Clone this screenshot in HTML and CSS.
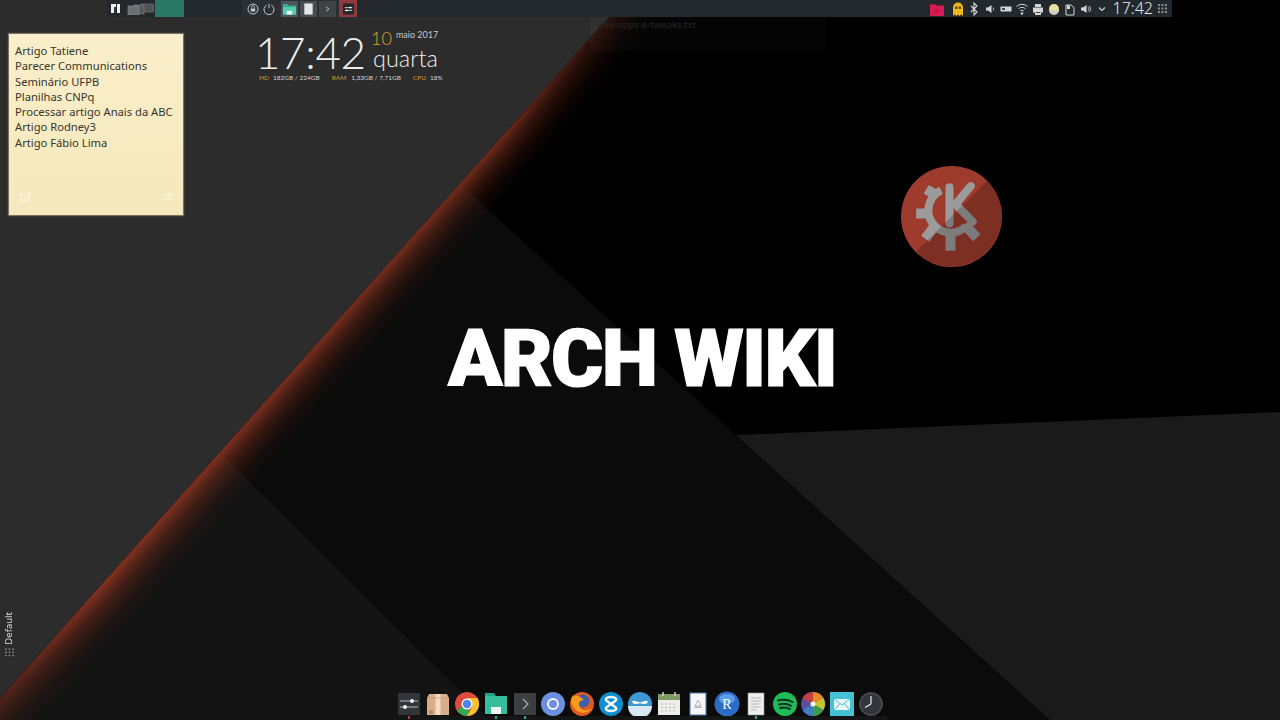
FILE: index.html
```html
<!DOCTYPE html>
<html lang="pt">
<head>
<meta charset="utf-8">
<title>Arch Wiki</title>
<link rel="stylesheet" href="styles.css">
</head>
<body>
<div class="desktop">
  <svg class="wallpaper" viewBox="0 0 1280 720" preserveAspectRatio="none">
    <defs>
      <linearGradient id="glow" gradientUnits="userSpaceOnUse" x1="220" y1="452" x2="254" y2="482">
        <stop offset="0" stop-color="#7e3020"/><stop offset=".28" stop-color="#7a2e1c" stop-opacity=".52"/><stop offset=".65" stop-color="#6a2814" stop-opacity=".16"/><stop offset="1" stop-color="#6a2814" stop-opacity="0"/>
      </linearGradient>
      <linearGradient id="along" gradientUnits="userSpaceOnUse" x1="624" y1="0" x2="0" y2="698">
        <stop offset="0" stop-color="#fff" stop-opacity=".3"/><stop offset=".2" stop-color="#fff"/><stop offset=".85" stop-color="#fff"/><stop offset="1" stop-color="#fff" stop-opacity=".55"/>
      </linearGradient>
      <mask id="fade"><rect width="1280" height="720" fill="url(#along)"/></mask>
    </defs>
    <rect width="1280" height="720" fill="#2c2c2c"/>
    <polygon points="624,0 1280,0 1280,720 0,720 0,698" fill="#000"/>
    <polygon points="460,184 1050,720 490,720 220,452" fill="#0b0b0b"/>
    <polygon points="220,452 490,720 0,720 0,698" fill="#131313"/>
    <polygon points="736,435 1280,412 1280,720 1050,720" fill="#1a1a1a"/>
    <g mask="url(#fade)"><polygon points="624,0 1280,0 1280,720 0,720 0,698" fill="url(#glow)"/></g>
    <rect x="590" y="17" width="236" height="34" fill="#fff" opacity=".018"/>
  </svg>

  <header class="panel">
    <svg class="menu-ic" viewBox="0 0 9 9"><path d="M0 0h5v9H0zM6 0h3v9H6z" fill="#eee"/><path d="M3 3h2v6H3z" fill="#333"/></svg>
    <svg class="pager" viewBox="0 0 27 12"><rect x="14" y="1" width="12.5" height="8" fill="#4d5356" stroke="#6d7274" stroke-width=".7"/><rect x="7" y="2" width="10" height="9" fill="#53595b" stroke="#767b7d" stroke-width=".7"/><rect x="1" y="3" width="11" height="9" fill="#6b7072" stroke="#8b8f90" stroke-width=".7"/></svg>
    <div class="active-task"></div>
    <div class="launchers">
      <svg class="ic-sm" viewBox="0 0 12 12"><circle cx="6" cy="6" r="5" fill="none" stroke="#c8cacb"/><rect x="3.8" y="5.5" width="4.4" height="3" fill="#c8cacb"/><path d="M4.6 5.5V4a1.4 1.4 0 0 1 2.8 0v1.500" fill="none" stroke="#c8cacb" stroke-width=".8"/></svg>
      <svg class="ic-sm power" viewBox="0 0 12 12"><path d="M3.600 2.200a5 5 0 1 0 4.800 0M6 .8v4.400" fill="none" stroke="#c8cacb"/></svg>
      <div class="task task-folder"><svg class="ic-task" viewBox="0 0 14 12"><path d="M0 1h5l1.500 1.500H14V12H0z" fill="#35b495"/><path d="M0 4h14v8H0z" fill="#54cdb0"/><path d="M4 12V8h6v4z" fill="#e8f5f1"/></svg></div>
      <div class="task"><svg class="ic-task" viewBox="0 0 14 12"><rect x="2.500" width="9" height="12" fill="#e6e7e8"/></svg></div>
      <div class="task task-term"><svg class="ic-task" viewBox="0 0 14 12"><path d="M5.500 3.500 8.500 6l-3 2.500" fill="none" stroke="#9a9d9f" stroke-width="1.100"/></svg></div>
      <div class="task task-current"><svg class="ic-task" viewBox="0 0 14 12"><rect x="1" y="0" width="12" height="12" rx="1" fill="#24282b"/><path d="M3 4.500h8M3 7.500h8" stroke="#d8dadb"/><circle cx="9" cy="4.500" r="1" fill="#fff"/><circle cx="5" cy="7.500" r="1" fill="#fff"/></svg></div>
    </div>
    <div class="tray">
      <svg class="tray-ic first" viewBox="0 0 16 14"><path d="M1 2h5l1.500 1.500H15V14H1z" fill="#d81b52"/><path d="M1 2h5l1 1H1z" fill="#a51440"/><circle cx="8" cy="9" r="1.500" fill="none" stroke="#8a1238" stroke-width=".7"/></svg>
      <svg class="tray-ic" viewBox="0 0 16 14"><path d="M3 14V5.500a5 5 0 0 1 10 0V14l-1.700-1.500L9.600 14 8 12.500 6.400 14l-1.700-1.500z" fill="#e9b71e"/><rect x="5" y="4.500" width="2.400" height="2.400" fill="#5b4a10"/><rect x="8.600" y="4.500" width="2.400" height="2.400" fill="#5b4a10"/></svg>
      <svg class="tray-ic" viewBox="0 0 16 14"><path d="M5 4l6 6-3 3V1l3 3-6 6" fill="none" stroke="#d4d6d7" stroke-width="1.100"/></svg>
      <svg class="tray-ic" viewBox="0 0 16 14"><path d="M4 5.500h2L9.500 3v8L6 8.500H4z" fill="#d4d6d7"/><path d="M11 5.500a2 2 0 0 1 0 3" fill="none" stroke="#d4d6d7" stroke-width=".8"/></svg>
      <svg class="tray-ic" viewBox="0 0 16 14"><rect x="2.500" y="4.500" width="11" height="5" fill="#d4d6d7"/><rect x="4" y="6" width="3" height="2" fill="#444"/></svg>
      <svg class="tray-ic" viewBox="0 0 16 14"><path d="M2.500 4.500a8 8 0 0 1 11 0M4.500 6.800a5 5 0 0 1 7 0M6.300 9a2.500 2.500 0 0 1 3.400 0" fill="none" stroke="#d4d6d7"/><circle cx="8" cy="11.500" r="1.200" fill="#d4d6d7"/></svg>
      <svg class="tray-ic" viewBox="0 0 16 14"><path d="M5 2h6v3H5zM3 5.500h10v5H3zM5 9h6v4H5z" fill="#d4d6d7"/><path d="M5.800 10.500h4.400" stroke="#444"/></svg>
      <svg class="tray-ic" viewBox="0 0 16 14"><circle cx="8" cy="7" r="5" fill="#e8e29a"/><path d="M3 8h10a5 5 0 0 1-10 0z" fill="#cfd0c4"/></svg>
      <svg class="tray-ic" viewBox="0 0 16 14"><path d="M4 3h5l3 2.500V13H4z" fill="#25292b" stroke="#d4d6d7"/><path d="M5 3.500h3V7H5z" fill="#d4d6d7"/></svg>
      <svg class="tray-ic" viewBox="0 0 16 14"><path d="M3 5.500h2L8.500 3v8L5 8.500H3z" fill="#d4d6d7"/><path d="M10 5a2.800 2.800 0 0 1 0 4M11.500 3.800a5 5 0 0 1 0 6.400" fill="none" stroke="#d4d6d7" stroke-width=".8"/></svg>
      <svg class="tray-ic" viewBox="0 0 16 14"><path d="M5 5.500l3 3 3-3" fill="none" stroke="#d4d6d7" stroke-width="1.100"/></svg>
      <span class="panel-time">17:42</span>
      <svg class="grid-ic" viewBox="0 0 9 9"><g fill="#8b8f91"><rect width="2" height="2"/><rect x="3.500" width="2" height="2"/><rect x="7" width="2" height="2"/><rect y="3.500" width="2" height="2"/><rect x="3.500" y="3.500" width="2" height="2"/><rect x="7" y="3.500" width="2" height="2"/><rect y="7" width="2" height="2"/><rect x="3.500" y="7" width="2" height="2"/><rect x="7" y="7" width="2" height="2"/></g></svg>
    </div>
  </header>

  <span class="ghost-title">kde-apps-e-tweaks.txt</span>

  <aside class="note">
    <ul class="note-list">
      <li>Artigo Tatiene</li>
      <li>Parecer Communications</li>
      <li>Seminário UFPB</li>
      <li>Planilhas CNPq</li>
      <li>Processar artigo Anais da ABC</li>
      <li>Artigo Rodney3</li>
      <li>Artigo Fábio Lima</li>
    </ul>
    <div class="note-tools">
      <svg class="note-ic" viewBox="0 0 10 10"><path d="M1 1v8h8V1M1 1l4 4 4-4M5 5v4" fill="none" stroke="#fffdf5" stroke-width=".9"/></svg>
      <svg class="note-ic" viewBox="0 0 10 10"><path d="M0 3.500h10M0 7h10M6 1v5" fill="none" stroke="#fffdf5" stroke-width=".9"/></svg>
    </div>
  </aside>

  <section class="clock">
    <div class="clock-top">
      <span class="clock-time">17:42</span>
      <div class="clock-date">
        <div class="clock-date-row"><span class="clock-day">10</span><span class="clock-month">maio 2017</span></div>
        <span class="clock-weekday">quarta</span>
      </div>
    </div>
    <div class="clock-stats">
      <span class="lab lab-hd">HD</span><span class="val val-mid">182GB / 224GB</span>
      <span class="lab lab-ram">RAM</span><span class="val val-mid">1,33GB / 7,71GB</span>
      <span class="lab lab-hd">CPU</span><span class="val">18%</span>
    </div>
  </section>

  <svg class="kde-logo" viewBox="0 0 100 100">
    <circle cx="50" cy="50" r="50" fill="#9e3b2c"/>
    <g fill="none" stroke="#9b9b9b">
      <path d="M39.700 24.100A22 22 0 1 0 64.600 59.600" stroke-width="8"/>
      <path d="M35 29 25 23M28 47H15M33 60 24 72M49 66V84M63 58 75 71" stroke-width="10"/>
      <path d="M48 21V57" stroke-width="8" stroke-linecap="round"/>
      <path d="M69 20 54 38 71 55" stroke-width="8" stroke-linecap="round" stroke-linejoin="round"/>
    </g>
    <path d="M14.600 85.400 85.400 14.600A50.070 50.070 0 0 1 14.600 85.400z" fill="#000" opacity=".2"/>
  </svg>

  <h1 class="headline">ARCH WIKI</h1>

  <div class="activity">
    <span class="activity-label">Default</span>
    <svg class="activity-ic" viewBox="0 0 10 9"><g fill="#888"><rect width="2" height="1.500"/><rect x="4" width="2" height="1.500"/><rect x="8" width="2" height="1.500"/><rect y="3.500" width="2" height="1.500"/><rect x="4" y="3.500" width="2" height="1.500"/><rect x="8" y="3.500" width="2" height="1.500"/><rect y="7" width="2" height="1.500"/><rect x="4" y="7" width="2" height="1.500"/><rect x="8" y="7" width="2" height="1.500"/></g></svg>
  </div>

  <footer class="dock">
    <div class="dock-icons">
      <svg class="dock-ic" viewBox="0 0 24 24"><rect x="1" y="1" width="22" height="22" fill="#30363a"/><path d="M3 9h18M3 15h18" stroke="#b8bcbe"/><circle cx="15" cy="9" r="2" fill="#f3f3f3"/><circle cx="8" cy="15" r="2" fill="#f3f3f3"/></svg>
      <svg class="dock-ic" viewBox="0 0 24 24"><path d="M3 2h18l2 4v17H1V6z" fill="#d8ad88"/><path d="M9.500 2h5v21h-5z" fill="#f2dcc6"/><path d="M1 6h22" stroke="#c19672" stroke-width=".6"/><rect x="3" y="18" width="4" height="4" fill="#b88e6c"/></svg>
      <svg class="dock-ic" viewBox="0 0 24 24"><circle cx="12" cy="12" r="12" fill="#de4b3e"/><path d="M12 12 1.600 18A12 12 0 0 0 15 23.600z" fill="#33a652"/><path d="M12 6h10.500A12 12 0 0 1 12 24l5.200-9z" fill="#fbc02d"/><circle cx="12" cy="12" r="5.500" fill="#fff"/><circle cx="12" cy="12" r="4.200" fill="#4a85f0"/></svg>
      <svg class="dock-ic" viewBox="0 0 24 24"><path d="M1 1h9l2 3H1z" fill="#1fa586"/><path d="M1 4h22v18H1z" fill="#36bd9b"/><path d="M7 22v-7h10v7z" fill="#eef7f4"/></svg>
      <svg class="dock-ic" viewBox="0 0 24 24"><rect x="1" y="1" width="22" height="22" fill="#3b3f40"/><path d="M10 7l5 5-5 5" fill="none" stroke="#a8abac" stroke-width="1.300"/></svg>
      <svg class="dock-ic" viewBox="0 0 24 24"><circle cx="12" cy="12" r="12" fill="#6d8fe0"/><circle cx="12" cy="12" r="6" fill="#f2f5fc"/><circle cx="12" cy="12" r="4" fill="#6d8fe0"/></svg>
      <svg class="dock-ic" viewBox="0 0 24 24"><circle cx="12" cy="12" r="12" fill="#e2591f"/><circle cx="13" cy="9" r="6.500" fill="#3a5fb0"/><path d="M1 9c2 12 15 16 21 7-4 3-12 4-13-4 0-3 3-4 5-4-3-3-8-6-10-3 0-1-1-2-1-2-1 2-2 4-2 6z" fill="#f59a1b"/></svg>
      <svg class="dock-ic" viewBox="0 0 24 24"><circle cx="12" cy="12" r="12" fill="#0f8fd0"/><path d="M7 6.500c2-2 8-2 10 0 1.500 2-3 3.500-5 5.500-2-2-6.500-3.500-5-5.500zM7 17.500c2 2 8 2 10 0 1.500-2-3-3.500-5-5.500-2 2-6.500 3.500-5 5.500z" fill="none" stroke="#fff" stroke-width="2.400"/></svg>
      <svg class="dock-ic" viewBox="0 0 24 24"><circle cx="12" cy="12" r="12" fill="#3f97d4"/><path d="M0 14h24a12 12 0 0 1-24 0z" fill="#d8e9f4"/><path d="M4 10c3-3 5 1 8 0 3 1 5-3 8 0-2 3-5 2-8 1-3 1-6 2-8-1z" fill="#fff"/></svg>
      <svg class="dock-ic" viewBox="0 0 24 24"><rect x="1" y="2" width="22" height="21" fill="#eeeee8"/><rect x="1" y="2" width="22" height="6" fill="#7e9a62"/><path d="M4 12h16M4 15.500h16M4 19h16" stroke="#b7b8ad" stroke-dasharray="2 2"/><path d="M6 0v4M18 0v4" stroke="#d5d6cd" stroke-width="1.500"/></svg>
      <svg class="dock-ic" viewBox="0 0 24 24"><rect x="4" y="1" width="16" height="22" fill="#f4f6f9" stroke="#4d7cb0"/><path d="M9 14l3-6 3 6zM8 15.500h8" fill="none" stroke="#98a0a8" stroke-width=".8"/></svg>
      <svg class="dock-ic" viewBox="0 0 24 24"><circle cx="12" cy="12" r="12.500" fill="#2b6dc4"/><ellipse cx="12" cy="7" rx="8" ry="5" fill="#5d9be4"/><text class="r-glyph" x="12" y="17">R</text></svg>
      <svg class="dock-ic" viewBox="0 0 24 24"><rect x="4" y="1" width="16" height="22" fill="#eeeeec" stroke="#9a9a98" stroke-width=".6"/><path d="M7 6h10M7 9h10M7 12h8M7 15h10M7 18h6" stroke="#a5a8ac" stroke-width=".8"/></svg>
      <svg class="dock-ic" viewBox="0 0 24 24"><circle cx="12" cy="12" r="12" fill="#1ebd5a"/><path d="M5 8.500c5-1.300 10-1 14.500 1.500M6 12.500c4-1 8.500-.8 12 1.300M7 16c3.500-.8 7-.6 10 1.100" fill="none" stroke="#10301c" stroke-width="2" stroke-linecap="round"/></svg>
      <svg class="dock-ic" viewBox="0 0 24 24"><circle cx="12" cy="12" r="12" fill="#5d4d9e"/><path d="M12 12 12 0A12 12 0 0 1 22.400 6z" fill="#e88b25"/><path d="M12 12 22.400 6A12 12 0 0 1 22.400 18z" fill="#c5c62f"/><path d="M12 12 22.400 18A12 12 0 0 1 12 24z" fill="#3f9d4a"/><path d="M12 12 12 24A12 12 0 0 1 1.600 18z" fill="#3f7fc4"/><path d="M12 12 12 0A12 12 0 0 0 1.600 6z" fill="#c43f3f"/><circle cx="12" cy="12" r="2.500" fill="#fff"/></svg>
      <svg class="dock-ic" viewBox="0 0 24 24"><rect width="24" height="24" fill="#45c1d6"/><path d="M4 7h16v11H4z" fill="#e8f8fb"/><path d="M4 7l8 6 8-6M4 18l6-6.500M20 18l-6-6.500" fill="none" stroke="#45c1d6"/></svg>
      <svg class="dock-ic" viewBox="0 0 24 24"><circle cx="12" cy="12" r="12" fill="#33363a"/><circle cx="12" cy="12" r="11" fill="none" stroke="#55585a"/><path d="M12 12 6 15.500M12 4v8" stroke="#eee" stroke-width="1.200"/></svg>
    </div>
    <div class="dock-strip">
      <i class="mark mark-red"></i><i class="mark mark-teal m2"></i><i class="mark mark-teal m3"></i><i class="mark mark-teal m4"></i>
    </div>
  </footer>
</div>
</body>
</html>
```
FILE: styles.css
```css
html, body { margin: 0; padding: 0; background: #000; }
.desktop {
  position: relative; width: 1280px; height: 720px; overflow: hidden;
  display: flex; flex-direction: column;
  font-family: "Noto Sans", sans-serif;
}
.wallpaper { position: absolute; left: 0; top: 0; width: 1280px; height: 720px; }

/* top panel */
.panel {
  position: relative; display: flex; align-items: center;
  margin-left: 107px; width: 1065px; height: 17px; background: #23282c; flex: none;
}
.menu-ic { width: 9px; height: 9px; margin-left: 4px; }
.pager { width: 27px; height: 12px; margin-left: 7px; }
.active-task { width: 29px; height: 17px; margin-left: 1px; background: #2a7766; }
.launchers { display: flex; align-items: center; height: 17px; margin-left: 58px; padding-left: 5px; padding-right: 0; background: #2a2f33; }
.ic-sm { width: 12px; height: 12px; display: block; }
.power { margin-left: 4px; margin-right: 6px; }
.task { width: 17px; height: 16px; margin-right: 2px; display: flex; align-items: center; justify-content: center; background: #474d50; }
.task-folder { background: #4e5558; }
.task-term { background: #3e4346; margin-right: 3px; }
.task-current { width: 18px; height: 17px; margin: 0; background: #8f3b3d; }
.ic-task { width: 13px; height: 12px; }
.tray { display: flex; align-items: center; margin-left: auto; }
.tray-ic { width: 16px; height: 14px; display: block; }
.tray-ic.first { margin-right: 5px; }
.panel-time { margin-left: 3px; font: 300 16px/17px "Noto Sans", sans-serif; color: #e9eaeb; min-width: 40px; flex: none; white-space: nowrap; }
.grid-ic { width: 9px; height: 9px; margin-left: 5px; margin-right: 5px; }

.ghost-title { position: absolute; left: 598px; top: 18px; font-size: 9.500px; line-height: 14px; color: #262626; }

/* sticky note */
.note {
  position: absolute; left: 9px; top: 34px; width: 174px; height: 181px; box-sizing: border-box;
  padding: 9px 0 0 6px; display: flex; flex-direction: column;
  background: linear-gradient(180deg, #f9efca, #f6e8bd);
  box-shadow: 0 0 1px 1px #77725f;
}
.note-list { list-style: none; margin: 0; padding: 0; font-size: 11.200px; line-height: 15.270px; color: #37342a; white-space: nowrap; }
.note-tools { display: flex; justify-content: space-between; margin: auto 10px 13px 5px; }
.note-ic { width: 10px; height: 10px; opacity: .8; }

/* clock widget */
.clock { position: absolute; left: 255px; top: 30px; color: #eeeeee; font-family: Lato, sans-serif; }
.clock-top { display: flex; align-items: flex-start; }
.clock-time { font-weight: 300; font-size: 44px; line-height: 44px; letter-spacing: -.4px; width: 116px; margin-right: 2px; white-space: nowrap; }
.clock-date { display: flex; flex-direction: column; margin-top: -1px; }
.clock-date-row { display: flex; align-items: flex-start; height: 16px; }
.clock-day { font-weight: 300; font-size: 18px; line-height: 18px; color: #e0a030; margin-left: -2px; }
.clock-month { font-size: 9px; line-height: 12px; margin-left: 4px; color: #c9c9c9; white-space: nowrap; }
.clock-weekday { font-weight: 300; font-size: 23.500px; line-height: 26px; }
.clock-stats { display: flex; align-items: center; font-size: 6.500px; line-height: 8px; padding-left: 4px; white-space: nowrap; }
.lab { color: #d99a2b; }
.lab-hd { margin-right: 4px; }
.lab-ram { margin-right: 5px; }
.val { color: #d5d5d5; }
.val-mid { margin-right: 12px; }

/* KDE logo */
.kde-logo { position: absolute; left: 901px; top: 166px; width: 101px; height: 101px; }

.headline {
  position: absolute; left: 448px; top: 312px; margin: 0;
  font-family: Roboto, sans-serif; font-weight: 900; font-size: 80px; line-height: 94px;
  color: #fff; white-space: nowrap; letter-spacing: -1.800px;
  -webkit-text-stroke: 1.200px #fff;
}

.activity { position: absolute; left: 4px; top: 612px; display: flex; flex-direction: column; align-items: center; width: 10px; }
.activity-label { writing-mode: vertical-rl; transform: rotate(180deg); font-size: 9.500px; line-height: 10px; color: #dcdcdc; }
.activity-ic { width: 9px; height: 9px; margin-top: 3px; }

/* dock */
.dock { margin-top: auto; margin-left: 393px; width: 494px; position: relative; flex: none; }
.dock-icons { display: flex; gap: 4.900px; padding-left: 4px; }
.dock-ic { width: 24px; height: 24px; display: block; flex: none; overflow: visible; }
.r-glyph { font-family: "Liberation Serif", serif; font-size: 14px; fill: #fff; text-anchor: middle; }
.dock-strip { position: relative; height: 4px; background: #141616; }
.mark { position: absolute; top: 0; width: 2px; height: 3px; }
.mark-red { left: 15px; background: #c0392b; }
.mark-teal { background: #2fa58b; }
.m2 { left: 102px; }
.m3 { left: 131px; }
.m4 { left: 362px; }
```
